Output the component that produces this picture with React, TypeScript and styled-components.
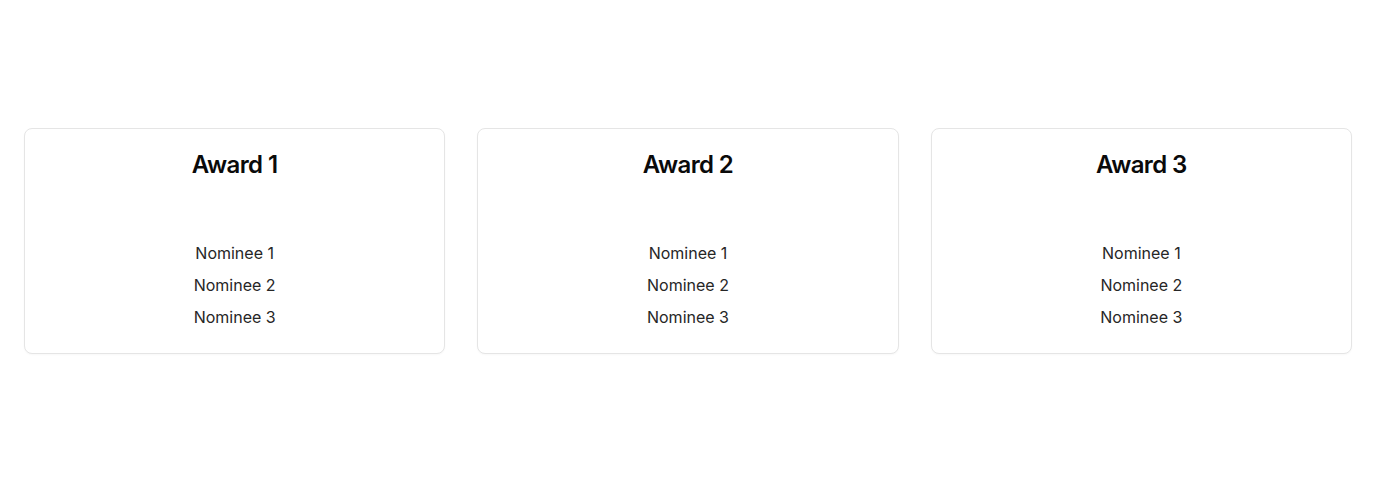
import styled, { createGlobalStyle } from "styled-components";

const GlobalStyle = createGlobalStyle`
  * {
    box-sizing: border-box;
  }

  body {
    margin: 0;
    background: #ffffff;
    font-family: Inter, "Liberation Sans", sans-serif;
    color: #0a0a0a;
  }
`;

const Page = styled.main`
  min-height: 100vh;
  display: flex;
  align-items: center;
  padding: 0 24px;
`;

const AwardGrid = styled.section`
  width: 100%;
  display: grid;
  grid-template-columns: repeat(3, 1fr);
  gap: 32px;
`;

const AwardCard = styled.article`
  display: flex;
  flex-direction: column;
  align-items: center;
  padding: 20px 24px 24px;
  border: 1px solid #e5e5e5;
  border-radius: 8px;
  background: #ffffff;
  box-shadow: 0 1px 2px 0 rgba(0, 0, 0, 0.03);
`;

const AwardTitle = styled.h2`
  margin: 0 0 60px;
  font-size: 24px;
  line-height: 32px;
  font-weight: 600;
  letter-spacing: -0.6px;
  color: #0a0a0a;
`;

const NomineeList = styled.ul`
  list-style: none;
  margin: 0;
  padding: 0;
  display: flex;
  flex-direction: column;
  align-items: center;
  gap: 8px;
`;

const Nominee = styled.li`
  font-size: 16px;
  line-height: 24px;
  color: #262626;
`;

const awards = [
  { name: "Award 1", nominees: ["Nominee 1", "Nominee 2", "Nominee 3"] },
  { name: "Award 2", nominees: ["Nominee 1", "Nominee 2", "Nominee 3"] },
  { name: "Award 3", nominees: ["Nominee 1", "Nominee 2", "Nominee 3"] },
];

const App = () => {
  return (
    <>
      <GlobalStyle />
      <Page>
        <AwardGrid>
          {awards.map(({ name, nominees }) => (
            <AwardCard key={name}>
              <AwardTitle>{name}</AwardTitle>
              <NomineeList>
                {nominees.map((nominee) => (
                  <Nominee key={nominee}>{nominee}</Nominee>
                ))}
              </NomineeList>
            </AwardCard>
          ))}
        </AwardGrid>
      </Page>
    </>
  );
};

export default App;
